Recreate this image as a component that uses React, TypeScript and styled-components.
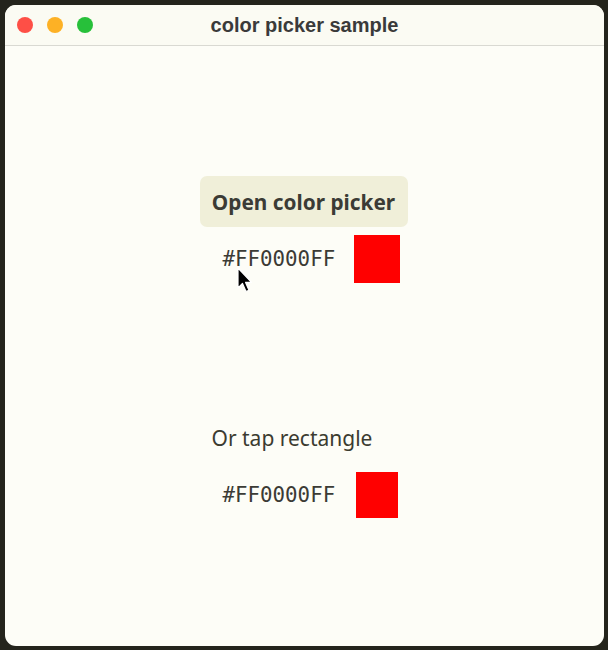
import React from 'react';
import styled, { createGlobalStyle } from 'styled-components';

const GlobalStyle = createGlobalStyle`
  html, body {
    margin: 0;
    padding: 0;
    background: #24241c;
  }
`;

const Frame = styled.div`
  width: 608px;
  height: 650px;
  padding: 5px 4px 4px 5px;
  box-sizing: border-box;
  background: #24241c;
`;

const Window = styled.div`
  position: relative;
  height: 100%;
  background: #fdfdf7;
  border-radius: 11px;
  overflow: hidden;
  display: flex;
  flex-direction: column;
`;

const TitleBar = styled.div`
  height: 41px;
  flex-shrink: 0;
  box-sizing: border-box;
  border-bottom: 1px solid #d9d9d2;
  background: #fbfbf3;
  display: flex;
  align-items: center;
  position: relative;
  padding-left: 12px;
  gap: 14px;
`;

const Light = styled.span<{ $color: string }>`
  width: 16px;
  height: 16px;
  border-radius: 50%;
  background: ${(p) => p.$color};
`;

const Title = styled.div`
  position: absolute;
  left: 0;
  right: 0;
  text-align: center;
  font-family: "Liberation Sans", Arial, sans-serif;
  font-weight: bold;
  font-size: 20px;
  color: #3a3a3a;
  pointer-events: none;
`;

const Content = styled.div`
  flex: 1;
  display: flex;
  justify-content: center;
  padding-top: 130px;
  padding-right: 2px;
`;

const Column = styled.div`
  width: 208px;
  display: flex;
  flex-direction: column;
`;

const PickerButton = styled.button`
  height: 51px;
  border: none;
  border-radius: 7px;
  background: #f0efd9;
  font-family: "Noto Sans", "Open Sans", sans-serif;
  font-weight: bold;
  font-size: 20.8px;
  color: #3b3b35;
  padding: 0;
  cursor: default;
`;

const Row = styled.div<{ $gap: number; $top: number }>`
  display: flex;
  align-items: center;
  gap: ${(p) => p.$gap}px;
  padding-left: 23px;
  margin-top: ${(p) => p.$top}px;
`;

const Hex = styled.span`
  width: 112px;
  font-family: "DejaVu Sans Mono", monospace;
  font-size: 20.8px;
  color: #3b3b35;
`;

const Swatch = styled.div<{ $w: number; $h: number }>`
  width: ${(p) => p.$w}px;
  height: ${(p) => p.$h}px;
  background: #ff0000;
`;

const Label = styled.div`
  margin-top: 143px;
  padding-left: 12px;
  font-family: "Noto Sans", "Open Sans", sans-serif;
  font-size: 21px;
  line-height: 24px;
  color: #3b3b30;
`;

const Cursor = styled.svg`
  position: absolute;
  left: 232px;
  top: 262px;
`;

export default function App() {
  return (
    <Frame>
      <GlobalStyle />
      <Window>
        <TitleBar>
          <Light $color="#fe4f46" />
          <Light $color="#fdb125" />
          <Light $color="#27c03a" />
          <Title>color picker sample</Title>
        </TitleBar>
        <Content>
          <Column>
            <PickerButton>Open color picker</PickerButton>
            <Row $gap={19} $top={8}>
              <Hex>#FF0000FF</Hex>
              <Swatch $w={46} $h={48} />
            </Row>
            <Label>Or tap rectangle</Label>
            <Row $gap={21} $top={22}>
              <Hex>#FF0000FF</Hex>
              <Swatch $w={42} $h={46} />
            </Row>
          </Column>
        </Content>
        <Cursor width="16" height="28" viewBox="0 0 16 28">
          <path
            d="M1 1 L1 21 L5.5 16.5 L9 24.5 L12 23.2 L8.6 15.4 L14.5 15.4 Z"
            fill="#000"
            stroke="#fff"
            strokeWidth="1.2"
            strokeLinejoin="round"
          />
        </Cursor>
      </Window>
    </Frame>
  );
}
